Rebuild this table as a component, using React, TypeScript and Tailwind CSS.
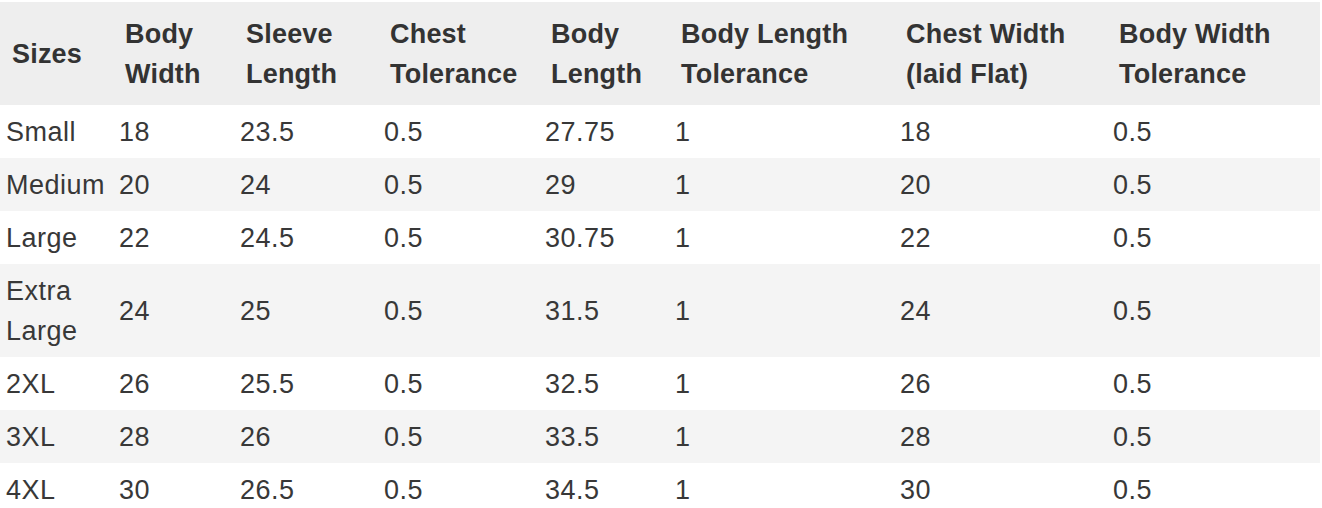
import React from "react";

const columns = [
  { label: ["Sizes"], w: "w-[113px]" },
  { label: ["Body", "Width"], w: "w-[121px]" },
  { label: ["Sleeve", "Length"], w: "w-[144px]" },
  { label: ["Chest", "Tolerance"], w: "w-[161px]" },
  { label: ["Body", "Length"], w: "w-[130px]" },
  { label: ["Body Length", "Tolerance"], w: "w-[225px]" },
  { label: ["Chest Width", "(laid Flat)"], w: "w-[213px]" },
  { label: ["Body Width", "Tolerance"], w: "w-[213px]" },
];

const rows = [
  ["Small", "18", "23.5", "0.5", "27.75", "1", "18", "0.5"],
  ["Medium", "20", "24", "0.5", "29", "1", "20", "0.5"],
  ["Large", "22", "24.5", "0.5", "30.75", "1", "22", "0.5"],
  ["Extra Large", "24", "25", "0.5", "31.5", "1", "24", "0.5"],
  ["2XL", "26", "25.5", "0.5", "32.5", "1", "26", "0.5"],
  ["3XL", "28", "26", "0.5", "33.5", "1", "28", "0.5"],
  ["4XL", "30", "26.5", "0.5", "34.5", "1", "30", "0.5"],
];

export default function App() {
  return (
    <div
      className="w-[1322px] h-[508px] overflow-hidden bg-white pt-[2px] text-[#333333]"
      style={{ fontFamily: '"Liberation Sans", Arial, sans-serif' }}
    >
      <table className="w-[1320px] table-fixed border-collapse text-[27px] leading-[40px]">
        <colgroup>
          {columns.map((c, i) => (
            <col key={i} className={c.w} />
          ))}
        </colgroup>
        <thead>
          <tr className="bg-[#eeeeee]">
            {columns.map((c, i) => (
              <th
                key={i}
                className="pl-[12px] pr-0 py-[11.5px] text-left align-middle font-bold tracking-[0.2px]"
              >
                {c.label.map((line, j) => (
                  <div key={j} className="whitespace-nowrap">
                    {line}
                  </div>
                ))}
              </th>
            ))}
          </tr>
        </thead>
        <tbody>
          {rows.map((r, i) => (
            <tr key={i} className={i % 2 === 1 ? "bg-[#f4f4f4]" : "bg-white"}>
              {r.map((cell, j) => (
                <td
                  key={j}
                  className="pl-[6px] pr-0 py-[6.5px] align-middle tracking-[0.5px] text-[#383838]"
                >
                  {j === 0 && cell === "Extra Large" ? (
                    <>
                      <div>Extra</div>
                      <div>Large</div>
                    </>
                  ) : (
                    cell
                  )}
                </td>
              ))}
            </tr>
          ))}
        </tbody>
      </table>
    </div>
  );
}
